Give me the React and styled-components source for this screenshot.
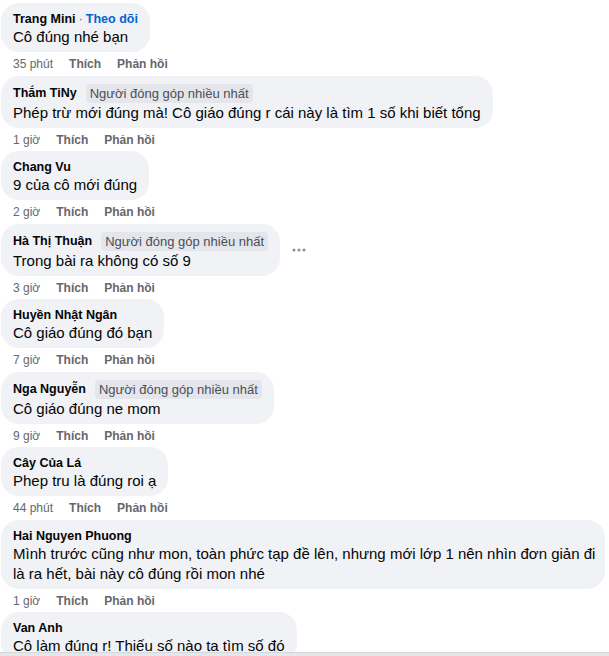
import React from "react";
import styled, { createGlobalStyle } from "styled-components";

const comments = [
  { name: "Trang Mini", follow: true, text: "Cô đúng nhé bạn", time: "35 phút" },
  {
    name: "Thắm TiNy",
    badge: true,
    text: "Phép trừ mới đúng mà! Cô giáo đúng r cái này là tìm 1 số khi biết tổng",
    time: "1 giờ",
  },
  { name: "Chang Vu", text: "9 của cô mới đúng", time: "2 giờ" },
  { name: "Hà Thị Thuận", badge: true, text: "Trong bài ra không có số 9", time: "3 giờ", more: true },
  { name: "Huyền Nhật Ngân", text: "Cô giáo đúng đó bạn", time: "7 giờ" },
  { name: "Nga Nguyễn", badge: true, text: "Cô giáo đúng ne mom", time: "9 giờ" },
  { name: "Cây Của Lá", text: "Phep tru là đúng roi ạ", time: "44 phút" },
  {
    name: "Hai Nguyen Phuong",
    text: [
      "Mình trước cũng như mon, toàn phức tạp đề lên, nhưng mới lớp 1 nên nhìn đơn giản đi",
      "là ra hết, bài này cô đúng rồi mon nhé",
    ],
    time: "1 giờ",
  },
  { name: "Van Anh", text: "Cô làm đúng r! Thiếu số nào ta tìm số đó", time: "" },
];

const App = () => {
  return (
    <>
      <GlobalStyle />
      <Page>
        <List>
          {comments.map((c, i) => (
            <Comment key={i}>
              <BubbleRow>
                <Bubble>
                  <NameRow $badge={c.badge}>
                    <Name>{c.name}</Name>
                    {c.follow && (
                      <>
                        <Dot>·</Dot>
                        <Follow>Theo dõi</Follow>
                      </>
                    )}
                    {c.badge && <Badge>Người đóng góp nhiều nhất</Badge>}
                  </NameRow>
                  <Text>
                    {Array.isArray(c.text)
                      ? c.text.map((line, j) => <Line key={j}>{line}</Line>)
                      : c.text}
                  </Text>
                </Bubble>
                {c.more && (
                  <More>
                    <svg width="14" height="4" viewBox="0 0 14 4">
                      <circle cx="2" cy="2" r="1.5" fill="#8a8d91" />
                      <circle cx="7" cy="2" r="1.5" fill="#8a8d91" />
                      <circle cx="12" cy="2" r="1.5" fill="#8a8d91" />
                    </svg>
                  </More>
                )}
              </BubbleRow>
              {c.time && (
                <Meta>
                  <Time>{c.time}</Time>
                  <Action>Thích</Action>
                  <Action>Phản hồi</Action>
                </Meta>
              )}
            </Comment>
          ))}
        </List>
        <BottomRule />
      </Page>
    </>
  );
};

const GlobalStyle = createGlobalStyle`
  html, body {
    margin: 0;
    padding: 0;
    background: #ffffff;
  }
  body {
    font-family: "Segoe UI", "Liberation Sans", Arial, sans-serif;
    color: #050505;
  }
`;

const Page = styled.div`
  width: 609px;
  height: 656px;
  overflow: hidden;
  display: flex;
  flex-direction: column;
`;

const List = styled.div`
  flex: 1;
  min-height: 0;
  overflow: hidden;
  padding: 3px 0 0 1px;
  display: flex;
  flex-direction: column;
  gap: 3.5px;
`;

const BottomRule = styled.div`
  height: 3px;
  flex-shrink: 0;
  background: #e4e6eb;
  border-top: 1px solid #d5d7db;
`;

const Comment = styled.div`
  display: flex;
  flex-direction: column;
  flex-shrink: 0;
`;

const BubbleRow = styled.div`
  display: flex;
  align-items: center;
`;

const Bubble = styled.div`
  background: #f0f2f5;
  border-radius: 18px;
  padding: 8px 12px 5px;
  max-width: 580px;
`;

const NameRow = styled.div`
  display: flex;
  align-items: center;
  height: ${(p) => (p.$badge ? "19px" : "16px")};
`;

const Name = styled.span`
  font-size: 12.5px;
  font-weight: 600;
  line-height: 16px;
  color: #050505;
`;

const Dot = styled.span`
  font-size: 13px;
  line-height: 16px;
  color: #65676b;
  margin: 0 3px;
`;

const Follow = styled.span`
  font-size: 12.5px;
  line-height: 16px;
  font-weight: 600;
  color: #0064d1;
`;

const Badge = styled.span`
  margin-left: 9px;
  background: #e4e6eb;
  border-radius: 4px;
  padding: 2px 4px 1px;
  font-size: 13px;
  line-height: 16px;
  color: #4b4f56;
`;

const Text = styled.div`
  font-size: 15px;
  line-height: 20px;
  color: #050505;
`;

const Line = styled.div`
  white-space: nowrap;
`;

const More = styled.div`
  margin-left: 3px;
  width: 32px;
  height: 32px;
  display: flex;
  align-items: center;
  justify-content: center;
`;

const Meta = styled.div`
  display: flex;
  align-items: center;
  gap: 16px;
  padding: 4px 0 0 12px;
  height: 16px;
  font-size: 12px;
  line-height: 16px;
  color: #65676b;
`;

const Time = styled.span`
  font-weight: 400;
`;

const Action = styled.span`
  font-weight: 700;
`;

export default App;
